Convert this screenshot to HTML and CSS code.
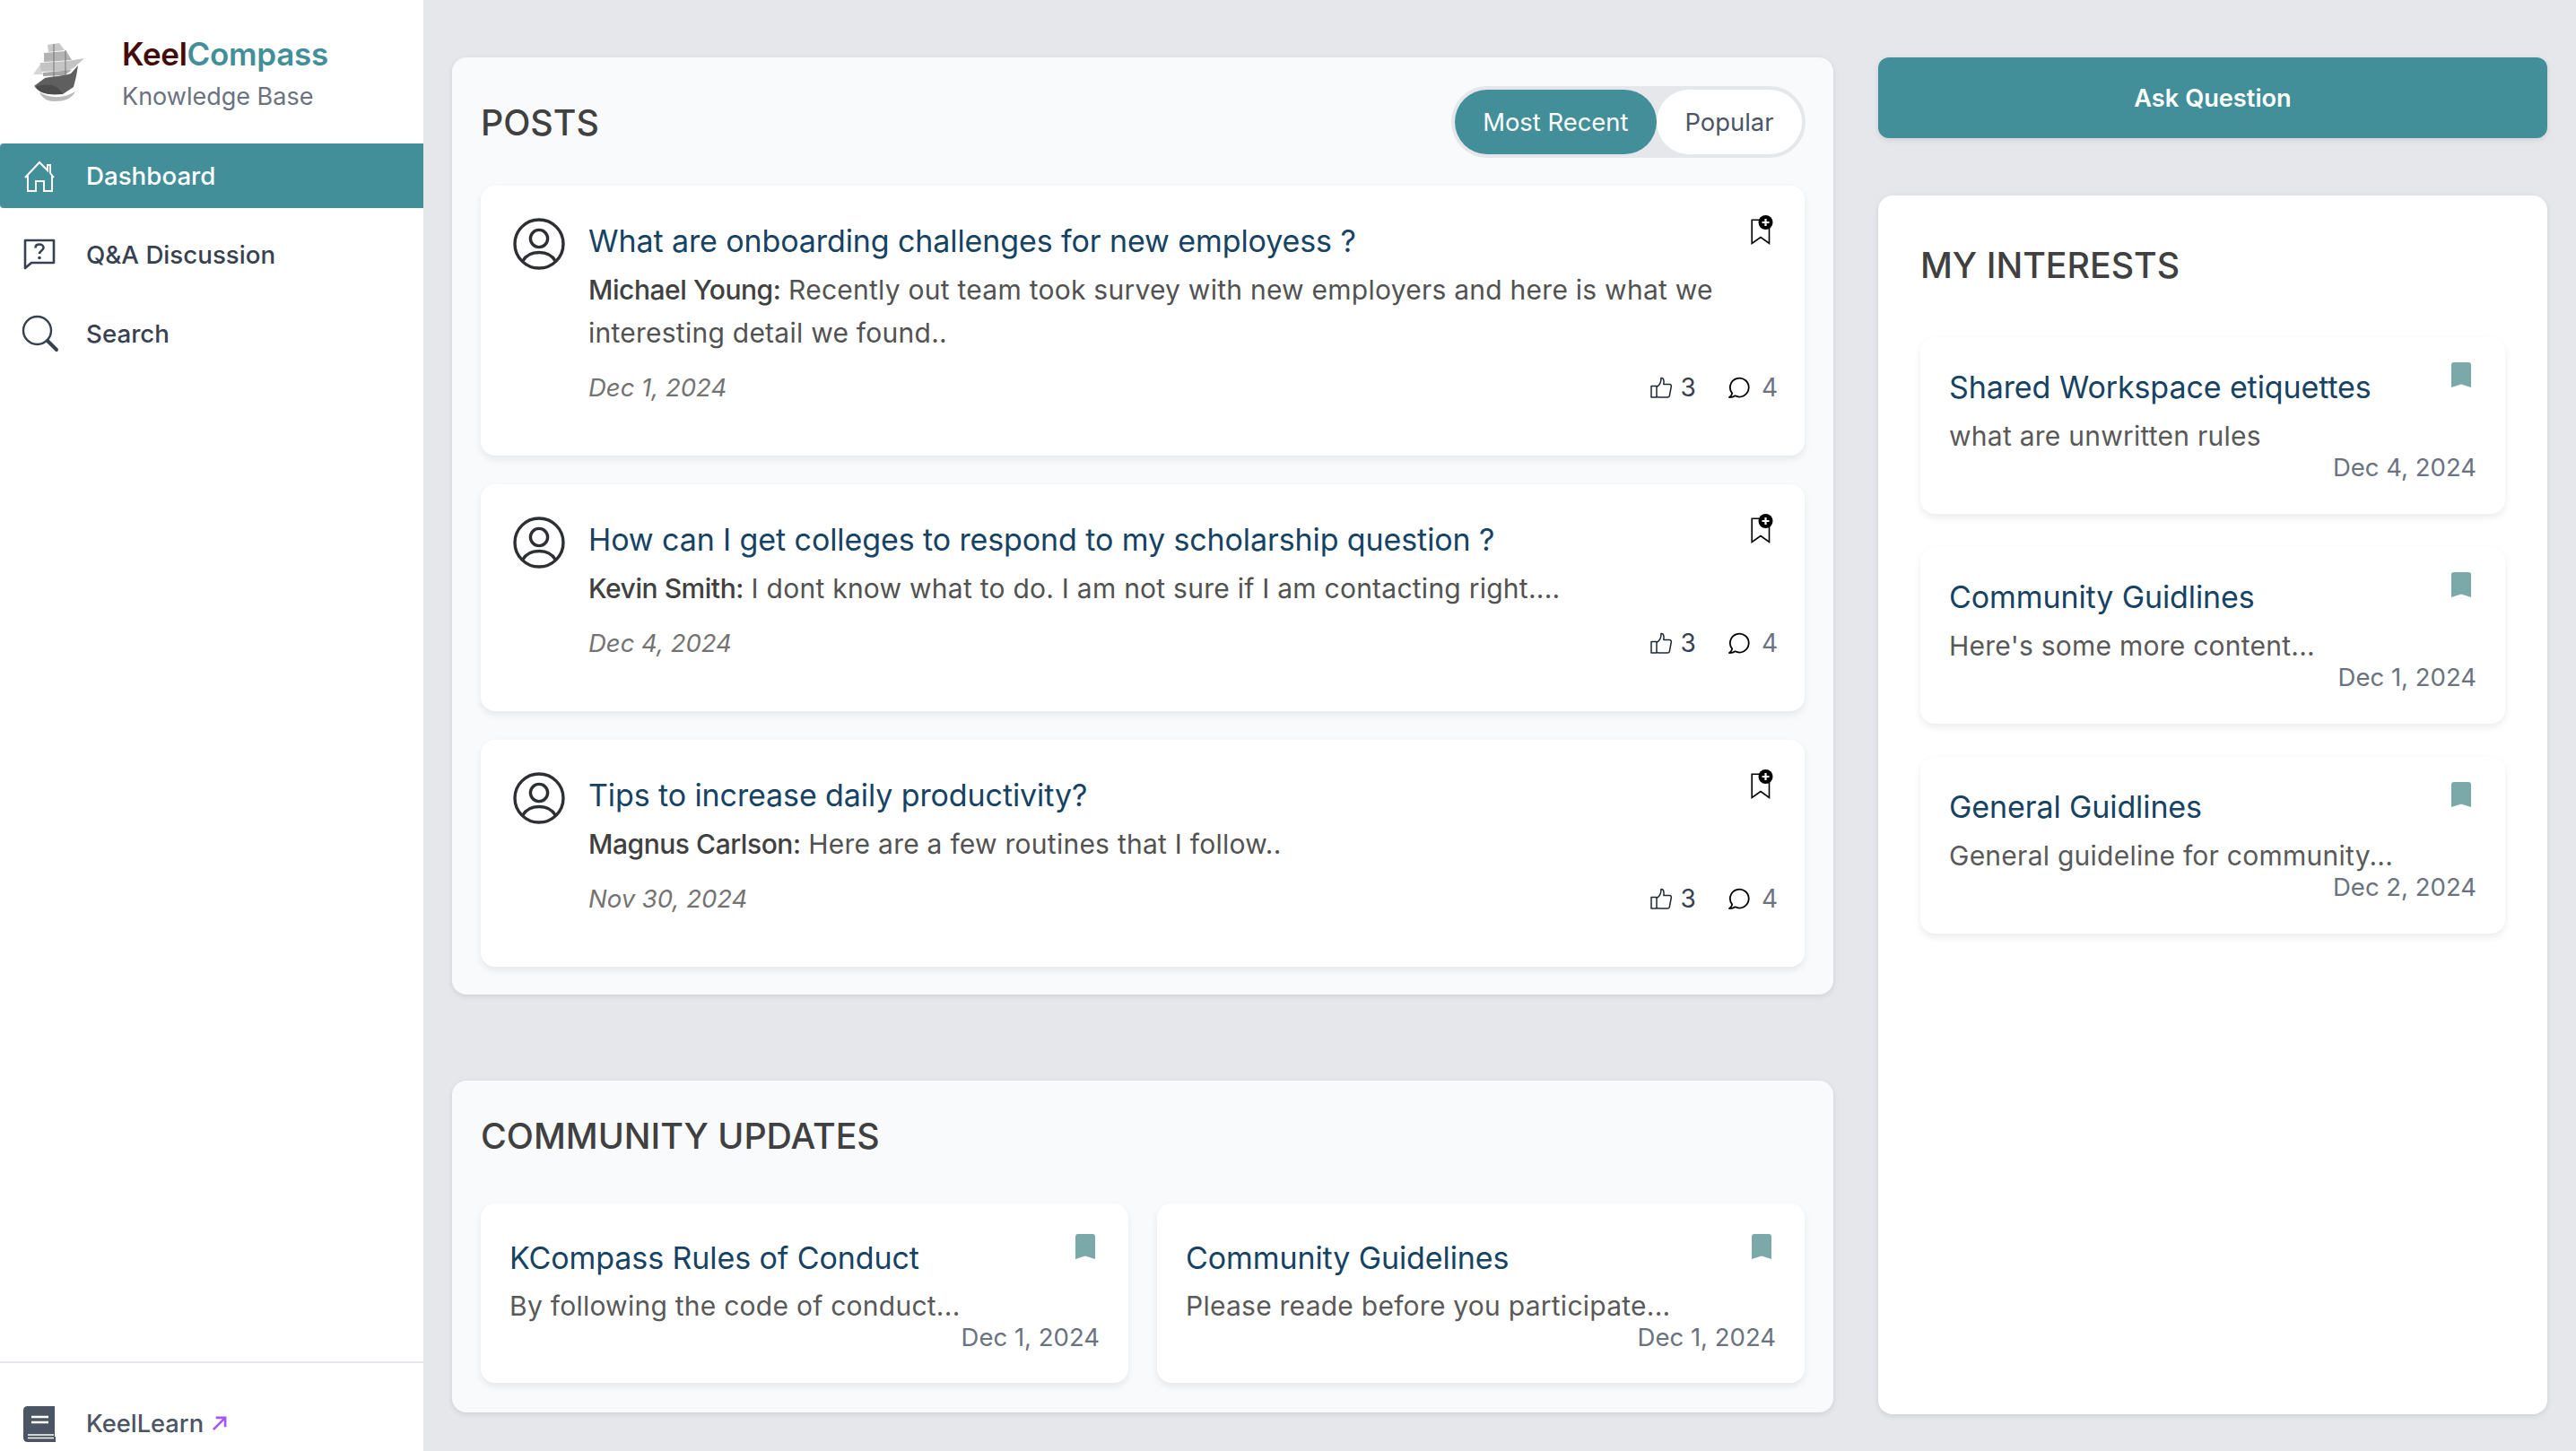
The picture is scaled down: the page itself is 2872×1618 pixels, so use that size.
FILE: index.html
```html
<!DOCTYPE html>
<html lang="en">
<head>
<meta charset="utf-8">
<title>KeelCompass Knowledge Base</title>
<link rel="stylesheet" href="styles.css">
</head>
<body>
<svg width="0" height="0" class="defs">
  <defs>
    <symbol id="add-mark" viewBox="0 0 26 34">
      <path d="M10 5.2H1.2V31.5L11 24.5L20.5 31.5V14" fill="none" stroke="#000" stroke-width="1.6"/>
      <circle cx="16.5" cy="8" r="8" fill="#000"/>
      <path d="M16.5 4V12M12.5 8H20.5" stroke="#fff" stroke-width="2.2"/>
    </symbol>
    <symbol id="solid-mark" viewBox="0 0 22 28">
      <path d="M0 3Q0 0 3 0H19Q22 0 22 3V28L11 24.5L0 28Z" fill="#7ba9aa"/>
    </symbol>
    <symbol id="avatar" viewBox="0 0 58 58">
      <circle cx="29" cy="29" r="27" fill="none" stroke="#2d2f33" stroke-width="3.4"/>
      <circle cx="29" cy="23" r="9.6" fill="none" stroke="#2d2f33" stroke-width="3.4"/>
      <path d="M10.5 48.5C14 42 21 38.5 29 38.5S44 42 47.5 48.5" fill="none" stroke="#2d2f33" stroke-width="3.4"/>
    </symbol>
    <symbol id="thumb" viewBox="0 0 24 24">
      <path d="M1 10.5H7V23H1ZM7 11.5C10 10 12 6.5 12 1.5C14.5 1 15.5 4 14.8 8.5H21.5C23 8.5 23.5 10 23.2 11.5L21.3 21.5C21 22.8 20 23 19 23H9.5C8 23 7 22.3 7 21.5" fill="none" stroke="#1f2937" stroke-width="1.5" stroke-linejoin="round"/>
    </symbol>
    <symbol id="bubble" viewBox="0 0 24 24">
      <path d="M4.2 18.6A10.4 10.4 0 1 1 7.5 21.3C5.5 22.8 3 23 1 23C2.7 21.8 3.8 20.3 4.2 18.6Z" fill="none" stroke="#000" stroke-width="1.8" stroke-linejoin="round"/>
    </symbol>
  </defs>
</svg>

<aside class="sidebar">
  <div class="brand">
    <svg class="ship" viewBox="0 0 58 66" width="58" height="66" aria-hidden="true">
      <path d="M17 3L30 1L36 9L18 11Z" fill="#c8c8c8"/>
      <path d="M13 12L38 10L44 20L13 22Z" fill="#b3b3b3"/>
      <path d="M9 23L40 21L58 18L47 28L40 32L7 33Z" fill="#c4c4c4"/>
      <path d="M1 36L8 26L12 36Z" fill="#d6d6d6"/>
      <path d="M12 34L44 31L36 37L12 38Z" fill="#a6a6a6"/>
      <path d="M24 2V44M37 9V42" stroke="#777" stroke-width="1"/>
      <path d="M2 49L14 40C24 38 34 38 43 35L51 26L49 38L46 50L34 58H18Z" fill="#5f5f5f"/>
      <path d="M3 50C14 46 28 46 34 58C22 59 10 59 3 50Z" fill="#4c4c4c"/>
      <path d="M8 56C18 62 34 64 48 55C44 63 36 66 24 66C16 66 11 62 8 56Z" fill="#b9b9b9"/>
    </svg>
    <div class="brand-text">
      <div class="brand-name"><span class="keel">Keel</span><span class="compass">Compass</span></div>
      <div class="brand-sub">Knowledge Base</div>
    </div>
  </div>
  <nav class="nav">
    <a class="nav-item active">
      <svg class="nav-icon" viewBox="0 0 36 36" width="36" height="36" aria-hidden="true">
        <path d="M2 20L18 3L27 12V6H30V15L34 20M5 18V35H14V24H23V35H32V18" fill="none" stroke="#fff" stroke-width="2"/>
      </svg>
      <span>Dashboard</span>
    </a>
    <a class="nav-item">
      <svg class="nav-icon" viewBox="0 0 36 36" width="36" height="36" aria-hidden="true">
        <path d="M2 2H34V27H9L2 33Z" fill="none" stroke="#374151" stroke-width="2.6" stroke-linejoin="round"/>
        <path d="M13.5 10.5C13.5 7.5 15.5 6.5 17.8 6.5C20.5 6.5 22.5 8 22.5 10.2C22.5 13.5 18 13.5 18 17" fill="none" stroke="#374151" stroke-width="2.6"/>
        <circle cx="18" cy="21.5" r="1.8" fill="#374151"/>
      </svg>
      <span>Q&amp;A Discussion</span>
    </a>
    <a class="nav-item">
      <svg class="nav-icon nav-search" viewBox="0 0 42 42" width="42" height="42" aria-hidden="true">
        <circle cx="17.5" cy="17.5" r="15.5" fill="none" stroke="#374151" stroke-width="2.4"/>
        <path d="M29 29L39 39" stroke="#374151" stroke-width="4" stroke-linecap="round"/>
      </svg>
      <span>Search</span>
    </a>
  </nav>
  <div class="side-foot">
    <svg class="nav-icon" viewBox="0 0 36 40" width="36" height="40" aria-hidden="true">
      <path d="M5 0H35V34H36V40H5Q0 40 0 35V5Q0 0 5 0Z" fill="#4b5563"/>
      <path d="M9 12H28M9 18H28" stroke="#fff" stroke-width="2.6"/>
      <path d="M5 32H34M5 35.5H34" stroke="#fff" stroke-width="1.6"/>
    </svg>
    <span>KeelLearn</span>
    <svg class="ext" viewBox="0 0 18 18" width="17" height="17" aria-hidden="true">
      <path d="M2 16L16 2M5 2H16V13" fill="none" stroke="#a855f7" stroke-width="2.8"/>
    </svg>
  </div>
</aside>

<main class="main">
  <div class="col-left">
    <section class="panel posts">
      <header class="posts-head">
        <h2 class="heading">POSTS</h2>
        <div class="toggle">
          <button class="tab on">Most Recent</button>
          <button class="tab">Popular</button>
        </div>
      </header>
      <div class="post-list">
        <article class="post">
          <svg class="avatar"><use href="#avatar"/></svg>
          <div class="post-body">
            <h3 class="title">What are onboarding challenges for new employess ?</h3>
            <p class="excerpt"><b>Michael Young:</b> Recently out team took survey with new employers and here is what we interesting detail we found..</p>
            <div class="post-meta">
              <em class="date">Dec 1, 2024</em>
              <span class="stat like"><svg class="stat-icon"><use href="#thumb"/></svg>3</span>
              <span class="stat talk"><svg class="stat-icon"><use href="#bubble"/></svg>4</span>
            </div>
          </div>
          <svg class="add-mark"><use href="#add-mark"/></svg>
        </article>
        <article class="post">
          <svg class="avatar"><use href="#avatar"/></svg>
          <div class="post-body">
            <h3 class="title">How can I get colleges to respond to my scholarship question ?</h3>
            <p class="excerpt"><b>Kevin Smith:</b> I dont know what to do. I am not sure if I am contacting right....</p>
            <div class="post-meta">
              <em class="date">Dec 4, 2024</em>
              <span class="stat like"><svg class="stat-icon"><use href="#thumb"/></svg>3</span>
              <span class="stat talk"><svg class="stat-icon"><use href="#bubble"/></svg>4</span>
            </div>
          </div>
          <svg class="add-mark"><use href="#add-mark"/></svg>
        </article>
        <article class="post">
          <svg class="avatar"><use href="#avatar"/></svg>
          <div class="post-body">
            <h3 class="title">Tips to increase daily productivity?</h3>
            <p class="excerpt"><b>Magnus Carlson:</b> Here are a few routines that I follow..</p>
            <div class="post-meta">
              <em class="date">Nov 30, 2024</em>
              <span class="stat like"><svg class="stat-icon"><use href="#thumb"/></svg>3</span>
              <span class="stat talk"><svg class="stat-icon"><use href="#bubble"/></svg>4</span>
            </div>
          </div>
          <svg class="add-mark"><use href="#add-mark"/></svg>
        </article>
      </div>
    </section>

    <section class="panel updates">
      <h2 class="heading updates-head">COMMUNITY UPDATES</h2>
      <div class="update-grid">
        <article class="mini">
          <svg class="solid-mark"><use href="#solid-mark"/></svg>
          <h3 class="title">KCompass Rules of Conduct</h3>
          <p class="mini-text">By following the code of conduct...</p>
          <div class="mini-date">Dec 1, 2024</div>
        </article>
        <article class="mini">
          <svg class="solid-mark"><use href="#solid-mark"/></svg>
          <h3 class="title">Community Guidelines</h3>
          <p class="mini-text">Please reade before you participate...</p>
          <div class="mini-date">Dec 1, 2024</div>
        </article>
      </div>
    </section>
  </div>

  <div class="col-right">
    <button class="ask">Ask Question</button>
    <section class="interests">
      <h2 class="heading interests-head">MY INTERESTS</h2>
      <div class="interest-list">
        <article class="mini">
          <svg class="solid-mark"><use href="#solid-mark"/></svg>
          <h3 class="title">Shared Workspace etiquettes</h3>
          <p class="mini-text">what are unwritten rules</p>
          <div class="mini-date">Dec 4, 2024</div>
        </article>
        <article class="mini">
          <svg class="solid-mark"><use href="#solid-mark"/></svg>
          <h3 class="title">Community Guidlines</h3>
          <p class="mini-text">Here's some more content...</p>
          <div class="mini-date">Dec 1, 2024</div>
        </article>
        <article class="mini">
          <svg class="solid-mark"><use href="#solid-mark"/></svg>
          <h3 class="title">General Guidlines</h3>
          <p class="mini-text">General guideline for community...</p>
          <div class="mini-date">Dec 2, 2024</div>
        </article>
      </div>
    </section>
  </div>
</main>
</body>
</html>
```

FILE: styles.css
```css
* { box-sizing: border-box; }
html, body { height: 100%; }
body {
  margin: 0;
  height: 1618px;
  overflow: hidden;
  display: flex;
  background: #e5e7eb;
  font-family: Inter, "Liberation Sans", sans-serif;
  color: #374151;
}
.defs { position: absolute; }
h2, h3, p { margin: 0; }

.sidebar {
  width: 472px;
  flex: none;
  height: 1618px;
  background: #fff;
  display: flex;
  flex-direction: column;
}
.brand {
  height: 160px;
  display: flex;
  align-items: flex-start;
  padding: 47px 0 0 36px;
  gap: 42px;
}
.brand-text { margin-top: -11px; }
.brand-name { font-size: 35px; line-height: 48px; font-weight: 600; letter-spacing: -0.3px; }
.keel { color: #450a0a; }
.compass { color: #428f99; }
.brand-sub { font-size: 27px; line-height: 44px; color: #6b7280; margin-top: 2px; }
.nav { display: flex; flex-direction: column; gap: 16px; flex: 1; }
.nav-item {
  height: 72px;
  display: flex;
  align-items: center;
  padding-left: 26px;
  gap: 34px;
  font-size: 27.7px;
  font-weight: 500;
  color: #374151;
}
.nav-item.active { background: #428f99; color: #fff; border-radius: 4px 0 0 4px; }
.nav-icon { flex: none; display: block; }
.nav-search { margin: 0 -4px 0 -2px; }
.side-foot {
  height: 100px;
  flex: none;
  border-top: 2px solid #e5e7eb;
  display: flex;
  align-items: flex-start;
  padding: 48px 0 0 26px;
  gap: 34px;
  font-size: 27.3px;
  font-weight: 500;
  color: #4b5563;
}
.side-foot span { line-height: 40px; }
.ext { margin: 11px 0 0 -25px; }

.main {
  flex: 1;
  display: flex;
  gap: 50px;
  padding: 64px 32px 0;
}
.col-left { width: 1540px; flex: none; display: flex; flex-direction: column; gap: 96px; }
.col-right { width: 746px; flex: none; display: flex; flex-direction: column; gap: 64px; }

.panel {
  background: #f9fafb;
  border-radius: 16px;
  padding: 32px;
  box-shadow: 0 2px 6px rgba(0, 0, 0, 0.1);
}
.posts { padding-bottom: 31px; }
.heading { font-size: 39.3px; line-height: 56px; font-weight: 500; color: #404040; }
.posts-head { display: flex; justify-content: space-between; align-items: center; height: 80px; margin-bottom: 31px; }
.posts-head .heading { padding-top: 2px; }
.toggle { display: flex; border: 4px solid #e5e7eb; background: #e5e7eb; border-radius: 40px; margin-right: -1px; }
.tab {
  height: 72px;
  border: 0;
  border-radius: 36px;
  background: #fff;
  font: 400 27.4px Inter, "Liberation Sans", sans-serif;
  color: #4b5563;
  padding: 0 31.5px;
}
.tab.on { background: #428f99; color: #fff; }

.post-list { display: flex; flex-direction: column; gap: 32px; }
.post {
  position: relative;
  background: #fff;
  border-radius: 16px;
  box-shadow: 0 4px 8px rgba(0, 0, 0, 0.08);
  display: flex;
  padding: 36px 32px 53px 36px;
}
.avatar { width: 58px; height: 58px; flex: none; margin-right: 26px; }
.post-body { flex: 1; min-width: 0; }
.title { font-size: 34px; line-height: 52px; font-weight: 400; letter-spacing: -0.1px; color: #164263; }
.excerpt { font-size: 30px; line-height: 48px; letter-spacing: 0.25px; color: #525252; margin-top: 4px; }
.excerpt b { font-weight: 500; color: #404040; letter-spacing: -0.45px; }
.post-meta { display: flex; align-items: center; margin: 14px -2px 0 0; height: 46px; font-size: 28px; }
.date { flex: 1; color: #737373; font-style: italic; font-size: 27.5px; }
.stat { display: flex; align-items: center; font-weight: 400; }
.stat-icon { width: 24px; height: 24px; margin-right: 10px; }
.like { color: #374151; margin-right: 36px; }
.talk { color: #6b7280; }
.talk .stat-icon { margin-right: 13px; }
.add-mark { position: absolute; top: 33px; right: 34px; width: 26px; height: 34px; }

.updates { padding-top: 34px; height: 370px; }
.updates-head { margin-bottom: 47px; }
.update-grid { display: grid; grid-template-columns: 1fr 1fr; gap: 32px; }
.mini {
  position: relative;
  background: #fff;
  border-radius: 16px;
  box-shadow: 0 4px 8px rgba(0, 0, 0, 0.08);
  padding: 35px 32px 0;
  height: 200px;
}
.solid-mark { position: absolute; top: 34px; right: 37px; width: 22px; height: 28px; }
.mini-text { font-size: 30px; line-height: 48px; letter-spacing: 0.25px; color: #595959; margin-top: 3px; }
.mini-date { font-size: 27.5px; line-height: 36px; color: #6b7280; text-align: right; margin-top: -7px; }

.ask {
  height: 90px;
  border: 0;
  border-radius: 12px;
  background: #428f99;
  color: #fff;
  font: 600 27.2px Inter, "Liberation Sans", sans-serif;
  box-shadow: 0 2px 6px rgba(0, 0, 0, 0.1);
}
.interests {
  height: 1359px;
  background: #fff;
  border-radius: 16px;
  padding: 50px 47px;
  box-shadow: 0 2px 6px rgba(0, 0, 0, 0.1);
}
.interests-head { margin-bottom: 52px; }
.interest-list { display: flex; flex-direction: column; gap: 37px; }
.interest-list .mini { height: 197px; padding-top: 30px; }
.interest-list .mini-text { margin-top: 4px; }
.interest-list .solid-mark { top: 28px; right: 38px; }
```
